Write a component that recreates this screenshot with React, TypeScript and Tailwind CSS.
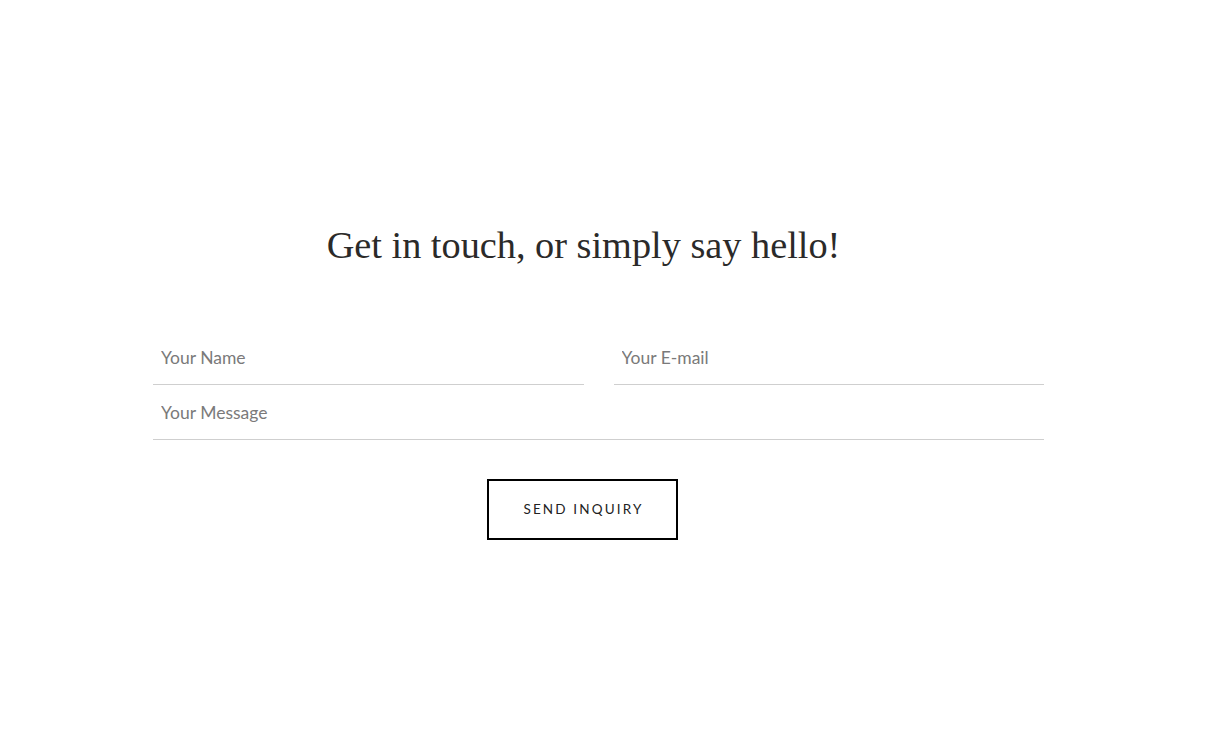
export default function App() {
  return (
    <div className="min-h-[745px] w-full bg-white">
      <div className="pt-[222px]">
        <h1
          className="pr-[52px] text-center text-[38.3px] leading-[46px] text-[#2b2a29]"
          style={{ fontFamily: '"Liberation Serif", serif' }}
        >
          Get in touch, or simply say hello!
        </h1>
        <form
          className="mt-[69px] ml-[153px] w-[891px]"
          style={{ fontFamily: 'Lato, "Liberation Sans", sans-serif' }}
          onSubmit={(e) => e.preventDefault()}
        >
          <div className="grid grid-cols-2 gap-[30px]">
            <input
              placeholder="Your Name"
              className="h-[48px] border-b border-[#cfcfcf] px-2 pb-[6px] text-[17.5px] text-[#555] placeholder:text-[#7a7a7a] outline-none"
            />
            <input
              placeholder="Your E-mail"
              className="h-[48px] border-b border-[#cfcfcf] px-2 pb-[6px] text-[17.5px] text-[#555] placeholder:text-[#7a7a7a] outline-none"
            />
          </div>
          <input
            placeholder="Your Message"
            className="mt-[6px] h-[49px] w-full border-b border-[#cfcfcf] px-2 pb-[6px] text-[17.5px] text-[#555] placeholder:text-[#7a7a7a] outline-none"
          />
          <div className="mt-[39px] pr-[32px] flex justify-center">
            <button
              type="submit"
              className="h-[61px] w-[191px] border-2 border-black pl-[2px] text-[13.5px] tracking-[0.16em] text-[#222]"
            >
              SEND INQUIRY
            </button>
          </div>
        </form>
      </div>
    </div>
  );
}
